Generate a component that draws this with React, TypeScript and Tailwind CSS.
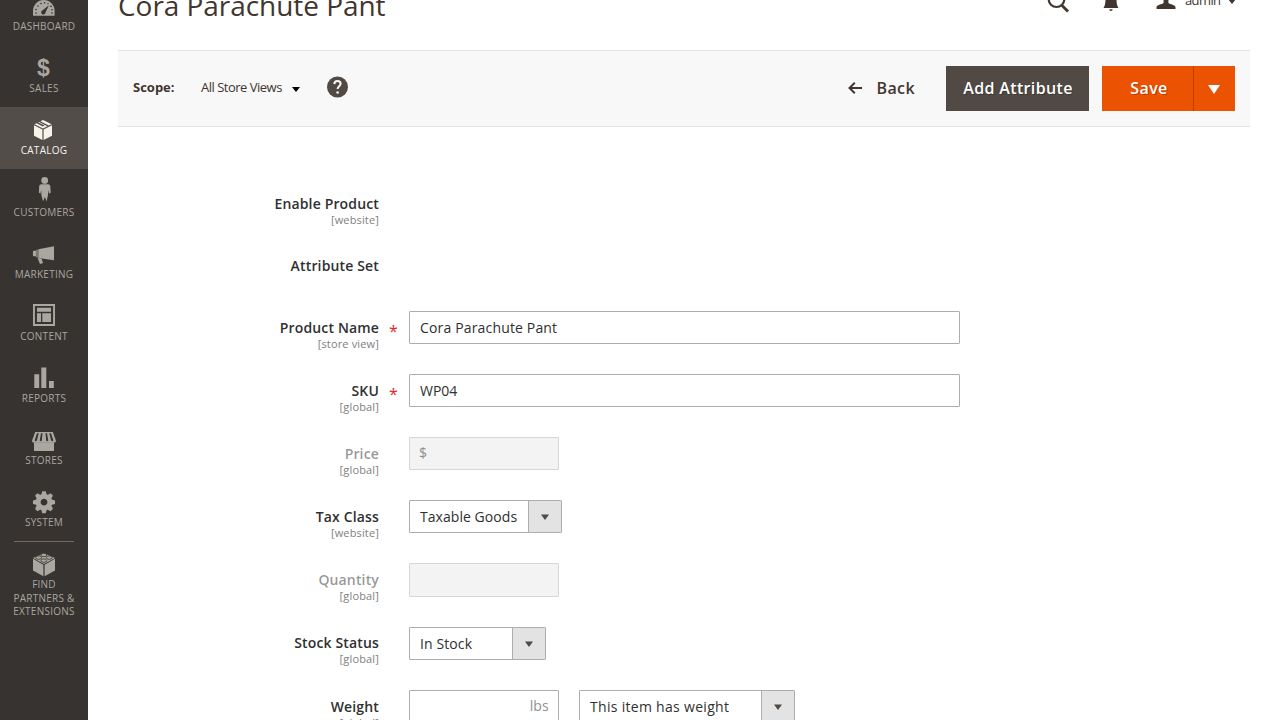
import type { ReactNode } from "react";

const CUTOUT = "#373330";

function MenuItem({ label, active, children }: { label: ReactNode; active?: boolean; children: ReactNode }) {
  return (
    <a
      className={
        active
          ? "flex h-[62px] shrink-0 flex-col items-center bg-[#524d49] text-[#f7f3eb]"
          : "flex h-[62px] shrink-0 flex-col items-center text-[#aaa6a0]"
      }
    >
      <svg width="88" height="37" viewBox="0 0 88 37" fill="currentColor" className="block shrink-0">
        {children}
      </svg>
      <span className="text-center text-[10px] leading-[13.6px] tracking-[0.25px] uppercase">{label}</span>
    </a>
  );
}

function Sidebar() {
  return (
    <nav className="h-[720px] w-[88px] shrink-0 overflow-hidden bg-[#373330]">
      <div className="-mt-[17px] flex flex-col">
        <MenuItem label="Dashboard">
          <path d="M33 32.7V27.8a10.8 10.8 0 0 1 21.6 0V32.7Z" />
          <g fill={CUTOUT}>
            <path d="M48.9 22.2 45.6 29.2a2.2 2.2 0 1 1-2.9-1.9Z" />
            <circle cx="36" cy="30" r=".8" />
            <circle cx="36" cy="26.5" r=".8" />
            <circle cx="38" cy="23" r=".8" />
            <circle cx="41" cy="20.5" r=".8" />
            <circle cx="44.6" cy="19.8" r=".8" />
            <circle cx="48" cy="20.6" r=".7" />
            <circle cx="51" cy="23.4" r=".8" />
            <circle cx="52" cy="26.7" r=".8" />
            <circle cx="52" cy="30" r=".8" />
          </g>
        </MenuItem>
        <MenuItem label="Sales">
          <text x="43.5" y="31" textAnchor="middle" fontSize="23" fontWeight="700" fontFamily="Liberation Sans, sans-serif">$</text>
        </MenuItem>
        <MenuItem label="Catalog" active>
          <path d="M34 18.3 42.4 22.5V33L34 28.8ZM52 18.3 43.6 22.5V33L52 28.8Z" />
          <path d="M43 13 51.6 17.2 48.8 18.6 40.4 14.3ZM39 15 47.4 19.3 43 21.5 34.5 17.2 36.5 16.2 42.8 19.4 44.7 18.4 38.2 15.4Z" />
        </MenuItem>
        <MenuItem label="Customers">
          <circle cx="44.7" cy="11.4" r="3.4" />
          <path d="M41.500 15.300h6.500c1.500 0 2.200.8 2.300 2l.4 6.200-1.500 1.200-.9-3.700-.3 5-1.400 6.500-1.700-4.500-1.900 4.500-1.600-6.500-.2-5-.8 3.700-1.500-1.200.3-6.200c.1-1.200.8-2 2.300-2Z" />
        </MenuItem>
        <MenuItem label="Marketing">
          <path d="M54 15.200V29.300L38.300 27V18.300Z" />
          <path d="M33.200 19.700h2.800v5.600h-2.800c-.4-1.800-.4-3.800 0-5.600ZM36.400 18.800h1.200v7.600h-1.200ZM37.600 27l3.800.6 1.700 4.400-3.100.9Z" />
        </MenuItem>
        <MenuItem label="Content">
          <path fillRule="evenodd" d="M33 11h22v22H33ZM34.900 12.900v18.200h18.200V12.900Z" />
          <path d="M37 14.700h14v4.100H37ZM37 20.300h4v8.700h-4ZM42.300 20.300H51v8.700h-8.700Z" />
        </MenuItem>
        <MenuItem label="Reports">
          <path d="M34.300 19.200h4.900V33h-4.900ZM41.300 12.600h5V33h-5ZM49 26h4.800v7H49Z" />
        </MenuItem>
        <MenuItem label="Stores">
          <path d="M34 25.500h20V34H34Z" />
          <path d="M35.200 15h17.600l3.100 8.600c0 1.400-.8 2.200-1.900 2.200H34c-1.100 0-1.900-.8-1.900-2.200Z" />
          <path
            fill={CUTOUT}
            d="M37 16.200 34.700 23.200c.2 1.400 1.900 1.400 2.300 0l1.700-7ZM41 16.200 39.700 23.500c.2 1 1.900 1 2.100 0l.7-7.300ZM45.500 16.200l.7 7.300c.2 1 1.900 1 2.100 0l-1.300-7.300ZM49.300 16.200l1.700 7c.4 1.400 2.100 1.400 2.300 0L51 16.200Z"
          />
        </MenuItem>
        <MenuItem label="System">
          <g transform="translate(44 23.2)">
            <circle r="5.8" fill="none" stroke="currentColor" strokeWidth="4.8" />
            {[0, 45, 90, 135, 180, 225, 270, 315].map((angle) => (
              <path key={angle} transform={`rotate(${angle})`} d="M-2.900-7 -1.700-11H1.700L2.900-7Z" />
            ))}
          </g>
        </MenuItem>
        <div className="mx-[14px] -mb-px h-px shrink-0 bg-[#736963]" />
        <MenuItem
          label={
            <>
              Find
              <br />
              Partners &amp;
              <br />
              Extensions
            </>
          }
        >
          <path d="M33 17.700 43.400 23.800V35.200L33 29.500ZM55 17.700 44.600 23.800V35.200L55 29.500Z" />
          <path d="M44 12.300 55 17 44 23 33 17Z" />
          <g stroke={CUTOUT} strokeWidth=".8">
            <ellipse cx="43.800" cy="14" rx="2.900" ry="1.700" />
            <ellipse cx="38.600" cy="16.600" rx="2.900" ry="1.700" />
            <ellipse cx="49.200" cy="16.600" rx="2.900" ry="1.700" />
            <ellipse cx="43.800" cy="19.600" rx="2.900" ry="1.700" />
          </g>
        </MenuItem>
      </div>
    </nav>
  );
}

function Header() {
  return (
    <header className="-mt-[15px] mr-[13px] flex h-[65px] shrink-0 items-start justify-between text-[#41362f]">
      <h1 className="text-[28px] leading-[40px] tracking-[-0.05px]">Cora Parachute Pant</h1>
      <div className="mt-px flex items-start">
        <svg width="24" height="30" viewBox="0 0 24 30" className="mr-[31px] block" fill="none" stroke="#41362f" strokeWidth="2.200">
          <circle cx="10.500" cy="13.200" r="7.800" />
          <path d="m16 19.500 6 6" strokeWidth="2.800" />
        </svg>
        <svg width="20" height="30" viewBox="0 0 20 30" className="mr-[35px] block" fill="#41362f">
          <path d="M10 5c4 0 5.500 3 5.500 7 0 5 .3 7.200 2 10h-15c1.700-2.800 2-5 2-10 0-4 1.500-7 5.500-7Z" />
          <path d="M8.300 23.300h3.400a1.700 1.700 0 0 1-3.400 0Z" />
        </svg>
        <svg width="20" height="30" viewBox="0 0 20 30" className="mr-[9px] block" fill="#41362f">
          <circle cx="10" cy="9.500" r="5.200" />
          <path d="M7.600 13h4.800v4c1.800 1.400 7.100 1.700 7.100 4.300V23h-19v-1.700c0-2.600 5.300-2.900 7.100-4.300Z" />
        </svg>
        <span className="mt-[5px] w-[36px] text-[13px] leading-[18px] tracking-[-0.600px]">admin</span>
        <svg width="10" height="30" viewBox="0 0 10 30" className="ml-[6px] block" fill="#41362f">
          <path d="M1 13h8l-4 5Z" />
        </svg>
      </div>
    </header>
  );
}

function Toolbar() {
  return (
    <div className="flex h-[77px] shrink-0 items-center border-y border-[#e3e3e3] bg-[#f8f8f8] pr-[15px] pl-[15px] text-[#41362f]">
      <span className="-mt-[4px] w-[42px] text-[13px] leading-[18px] font-bold">Scope:</span>
      <span className="-mt-[4px] ml-[26px] w-[82px] text-[13px] leading-[18px] tracking-[-0.500px] whitespace-nowrap">All Store Views</span>
      <svg width="8" height="5" viewBox="0 0 8 5" className="mt-[2px] ml-[9px]" fill="#000">
        <path d="M0 0h8L4 5Z" />
      </svg>
      <svg width="22" height="22" viewBox="0 0 22 22" className="-mt-[3px] ml-[26px]">
        <circle cx="11.500" cy="11" r="10.500" fill="#514943" />
        <path d="M8.300 8.100c.1-2 1.400-3 3.200-3s3.100 1.100 3.100 2.700c0 2.300-3 2.500-3 5.200" fill="none" stroke="#f8f8f8" strokeWidth="2" />
        <circle cx="11.600" cy="16.500" r="1.300" fill="#f8f8f8" />
      </svg>
      <div className="ml-auto flex items-center text-[16px] leading-[22px] font-semibold tracking-[0.4px]">
        <svg width="14" height="12" viewBox="0 0 14 12" fill="none" stroke="#41362f" strokeWidth="2" className="-mt-px mr-[14px]">
          <path d="M1.500 6H14M6.800.8 1.500 6l5.300 5.200" />
        </svg>
        <span className="-mt-[2px] mr-[31px]">Back</span>
        <button className="mr-[13px] h-[45px] w-[143px] bg-[#514943] pb-[2px] pl-px tracking-[0.35px] whitespace-nowrap text-white [text-shadow:1px_1px_0_rgba(0,0,0,0.25)]">
          Add Attribute
        </button>
        <button className="h-[45px] w-[92px] border-r border-[#b84002] bg-[#eb5202] pb-[2px] pl-[3px] tracking-[0.4px] text-white [text-shadow:1px_1px_0_rgba(0,0,0,0.25)]">
          Save
        </button>
        <button className="flex h-[45px] w-[41px] items-center justify-center bg-[#eb5202] pr-px">
          <svg width="12" height="9" viewBox="0 0 12 9" fill="#fff" className="mt-px">
            <path d="M0 0h12L6 9Z" />
          </svg>
        </button>
      </div>
    </div>
  );
}

function Field({ label, scope, required, disabled, children }: { label: string; scope?: string; required?: boolean; disabled?: boolean; children?: ReactNode }) {
  return (
    <div className="flex min-h-[63px] shrink-0 items-start">
      <div className="flex w-[261px] flex-col items-end pt-[7px]">
        <span
          className={
            disabled
              ? "text-[14px] leading-[19px] font-semibold tracking-[0.15px] text-[#303030]/50"
              : "text-[14px] leading-[19px] font-semibold tracking-[0.15px] text-[#303030]"
          }
        >
          {label}
        </span>
        {scope && <span className="-mt-px text-[11px] leading-[15px] tracking-[0.15px] text-[#808080]">{scope}</span>}
      </div>
      <div className="w-[30px] pt-[9px] pl-[10px] text-[16px] leading-[22px] text-[#e22626]">{required && "*"}</div>
      {children}
    </div>
  );
}

function Select({ value, className }: { value: string; className: string }) {
  return (
    <div className={`flex h-[33px] overflow-hidden rounded-[1px] border border-[#adadad] bg-white text-[14px] leading-[31px] text-[#303030] ${className}`}>
      <span className="flex-1 pl-[10px] whitespace-nowrap">{value}</span>
      <span className="flex w-[33px] items-center justify-center border-l border-[#adadad] bg-[#e3e3e3]">
        <svg width="8" height="6" viewBox="0 0 8 6" fill="#514943" className="mt-px">
          <path d="M0 0.500h8L4 6Z" />
        </svg>
      </span>
    </div>
  );
}

export default function App() {
  return (
    <div className="flex h-[720px] w-[1280px] overflow-hidden bg-white font-['Open_Sans',sans-serif]">
      <Sidebar />
      <main className="ml-[30px] flex w-[1132px] flex-col">
        <Header />
        <Toolbar />
        <div className="flex flex-col pt-[60px]">
          <div className="h-[62px]">
            <Field label="Enable Product" scope="[website]" />
          </div>
          <div className="h-[62px]">
            <Field label="Attribute Set" />
          </div>
          <Field label="Product Name" scope="[store view]" required>
            <div className="h-[33px] w-[551px] rounded-[1px] border border-[#adadad] pl-[10px] text-[14px] leading-[31px] tracking-[0.16px] text-[#303030]">
              Cora Parachute Pant
            </div>
          </Field>
          <Field label="SKU" scope="[global]" required>
            <div className="h-[33px] w-[551px] rounded-[1px] border border-[#adadad] pl-[10px] text-[14px] leading-[31px] text-[#303030]">WP04</div>
          </Field>
          <Field label="Price" scope="[global]" disabled>
            <div className="h-[33px] w-[150px] rounded-[1px] border border-[#d6d6d6] bg-[#f3f3f3] pl-[9px] text-[14px] leading-[30px] text-[#8f8f8f]">$</div>
          </Field>
          <Field label="Tax Class" scope="[website]">
            <Select value="Taxable Goods" className="w-[153px] tracking-[0.05px]" />
          </Field>
          <Field label="Quantity" scope="[global]" disabled>
            <div className="mb-[30px] h-[34px] w-[150px] rounded-[1px] border border-[#d6d6d6] bg-[#f3f3f3]" />
          </Field>
          <div className="-mt-px flex flex-col">
            <Field label="Stock Status" scope="[global]">
              <div className="pt-px">
                <Select value="In Stock" className="w-[137px] tracking-[0.1px]" />
              </div>
            </Field>
          </div>
          <div className="pt-px">
            <Field label="Weight" scope="[global]">
              <div className="mr-[20px] h-[33px] w-[150px] rounded-[1px] border border-[#adadad] pr-[9px] text-right text-[14px] leading-[30px] tracking-[0.2px] text-[#8f8f8f]">
                lbs
              </div>
              <Select value="This item has weight" className="w-[216px] tracking-[0.3px]" />
            </Field>
          </div>
        </div>
      </main>
    </div>
  );
}
